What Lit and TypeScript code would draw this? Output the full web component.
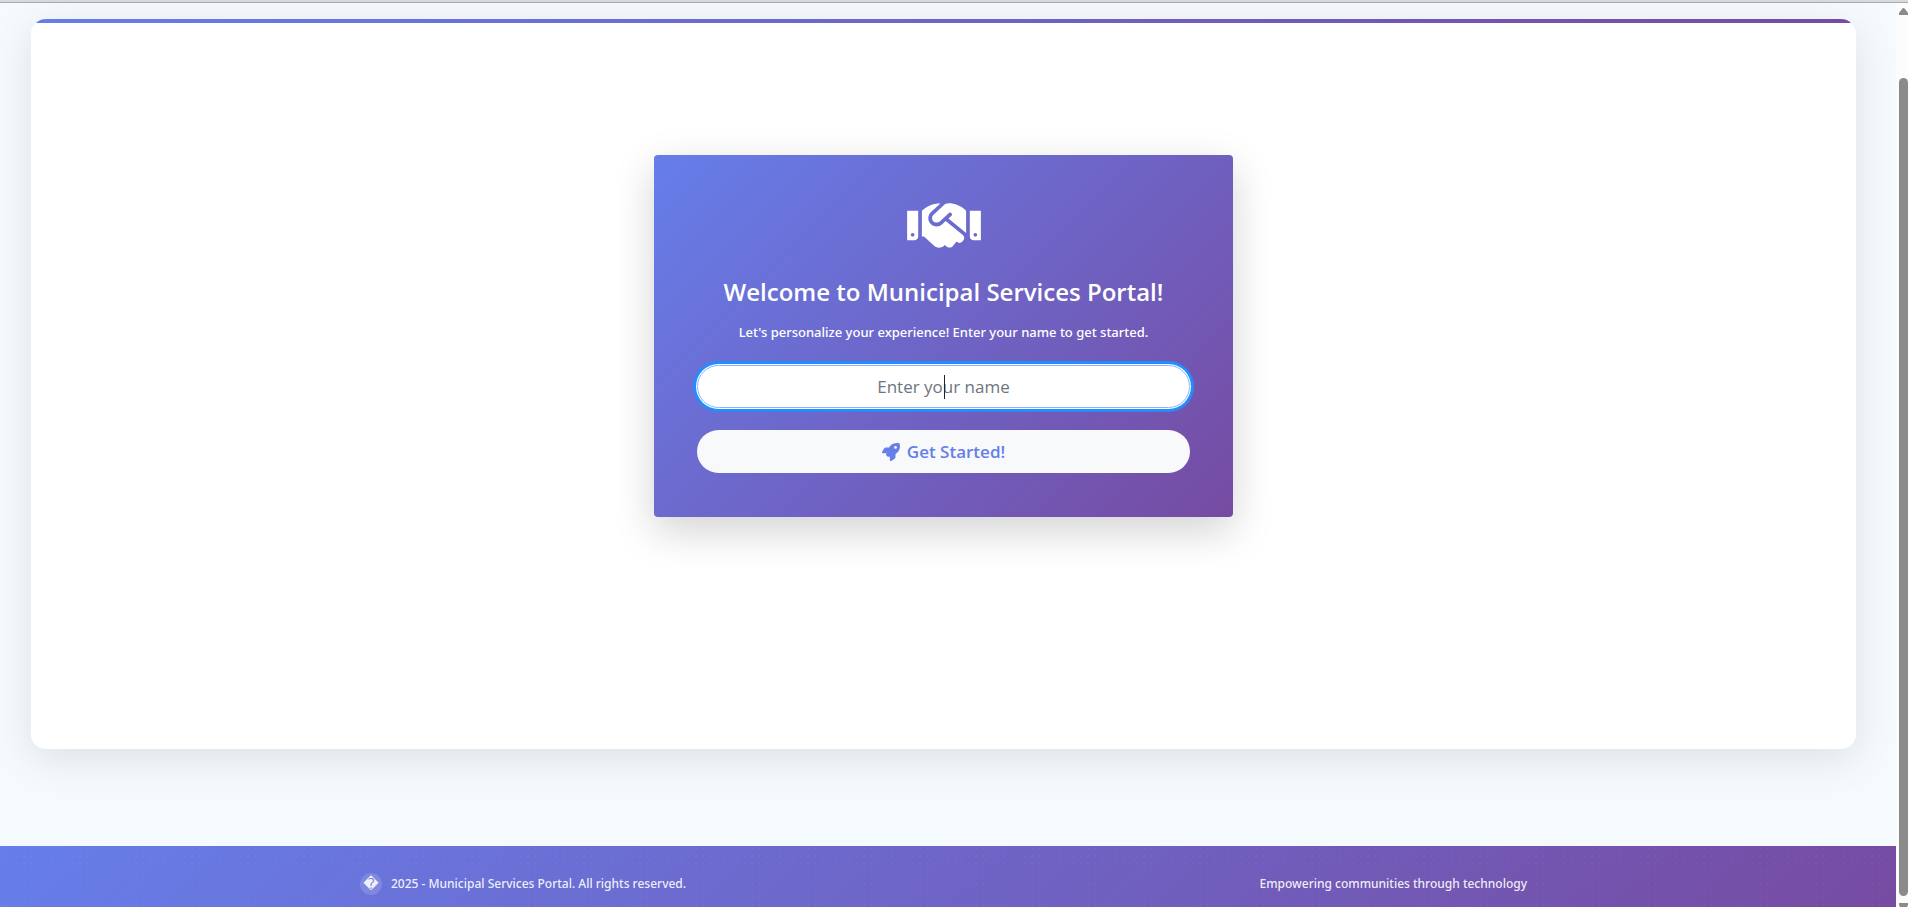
import { LitElement, html, css, svg } from "lit";
import { customElement, state } from "lit/decorators.js";

const handshake = svg`<path fill="currentColor" d="M0 383.9l64 .0404c17.75 0 32-14.29 32-32.03V128.3L0 128.3V383.9zM48 320.1c8.75 0 16 7.118 16 15.99c0 8.742-7.25 15.99-16 15.99S32 344.8 32 336.1C32 327.2 39.25 320.1 48 320.1zM348.8 64c-7.941 0-15.66 2.969-21.52 8.328L228.9 162.3C228.8 162.5 228.8 162.7 228.6 162.7C212 178.3 212.3 203.2 226.5 218.7c12.75 13.1 39.38 17.62 56.13 2.75C282.8 221.3 282.9 221.3 283 221.2l79.88-73.1c6.5-5.871 16.75-5.496 22.62 1c6 6.496 5.5 16.62-1 22.62l-26.12 23.87L504 313.7c2.875 2.496 5.5 4.996 7.875 7.742V127.1c-40.98-40.96-96.48-63.88-154.4-63.88L348.8 64zM334.6 217.4l-30 27.49c-29.75 27.11-75.25 24.49-101.8-4.371C176 211.2 178.1 165.7 207.3 138.9L289.1 64H282.5C224.7 64 169.1 87.08 128.2 127.9L128 351.8l18.25 .0369l90.5 81.82c27.5 22.37 67.75 18.12 90-9.246l18.12 15.24c15.88 12.1 39.38 10.5 52.38-5.371l31.38-38.6l5.374 4.498c13.75 11 33.88 9.002 45-4.748l9.538-11.78c11.12-13.75 9.036-33.78-4.694-44.93L334.6 217.4zM544 128.4v223.6c0 17.62 14.25 32.05 31.1 32.05L640 384V128.1L544 128.4zM592 352c-8.75 0-16-7.246-16-15.99c0-8.875 7.25-15.99 16-15.99S608 327.2 608 336.1C608 344.8 600.8 352 592 352z"/>`;

const rocket = svg`<path fill="currentColor" d="M156.6 384.9L125.7 353.1C117.2 345.5 114.2 333.1 117.1 321.8C120.1 312.9 124.1 301.3 129.8 288H24C15.38 288 7.414 283.4 3.146 275.9C-1.123 268.4-1.042 259.2 3.357 251.8L55.83 163.3C68.79 141.4 92.33 127.1 117.8 127.1H200C202.4 124 204.8 120.3 207.2 116.7C289.1-4.07 411.1-8.142 483.9 5.275C495.6 7.414 504.6 16.43 506.7 28.06C520.1 100.9 516.1 222.9 395.3 304.8C391.8 307.2 387.1 309.6 384 311.1V394.2C384 419.7 370.6 443.2 348.7 456.2L260.2 508.6C252.8 513 243.6 513.1 236.1 508.9C228.6 504.6 224 496.6 224 488V380.8C209.9 385.6 197.6 389.7 188.3 392.7C177.1 396.3 164.9 393.2 156.6 384.9V384.9zM384 167.1C406.1 167.1 424 150.1 424 127.1C424 105.9 406.1 87.1 384 87.1C361.9 87.1 344 105.9 344 127.1C344 150.1 361.9 167.1 384 167.1z"/>`;

@customElement("welcome-card")
class WelcomeCard extends LitElement {
  @state() private name = "";

  static styles = css`
    :host {
      display: block;
      width: 100%;
      max-width: 579px;
    }
    .card {
      box-sizing: border-box;
      padding: 41px 43px 44px;
      border-radius: 4px;
      background: linear-gradient(135deg, #667eea 0%, #764ba2 100%);
      box-shadow: 0 14px 42px rgba(0, 0, 0, 0.175);
      color: #fff;
      text-align: center;
    }
    .icon {
      display: block;
      width: 74px;
      height: 59px;
      margin: 0 auto 21px;
    }
    .title {
      margin: 0;
      font-size: 24px;
      line-height: 32px;
      font-weight: 600;
    }
    .lead {
      margin: 14px 0 23px;
      font-family: "Segoe UI", "Noto Sans", sans-serif;
      font-size: 13px;
      line-height: 20px;
      font-weight: 500;
    }
    .form {
      display: grid;
      gap: 22px;
    }
    .field {
      position: relative;
      display: block;
    }
    .field.empty::after {
      content: "";
      position: absolute;
      left: 50%;
      top: 10px;
      bottom: 9px;
      width: 1px;
      background: #212529;
    }
    .input,
    .button {
      box-sizing: border-box;
      display: block;
      width: 100%;
      height: 43px;
      border-radius: 22px;
      font-family: inherit;
      font-size: 17px;
      line-height: 26px;
      text-align: center;
    }
    .input {
      padding: 7px 14px;
      border: 1px solid #86b7fe;
      outline: 0;
      background: #fff;
      color: #212529;
      box-shadow: 0 0 0 1px #fff, 0 0 0 4px #258cfb;
    }
    .input::placeholder {
      color: #6c757d;
      opacity: 1;
    }
    .button {
      display: flex;
      align-items: center;
      justify-content: center;
      gap: 7px;
      padding: 0 14px;
      border: 0;
      background: #f8f9fa;
      color: #667eea;
      font-weight: 600;
      cursor: pointer;
    }
    .rocket {
      width: 18px;
      height: 18px;
    }
  `;

  render() {
    return html`
      <section class="card">
        <svg class="icon" viewBox="0 0 640 512" aria-hidden="true">${handshake}</svg>
        <h1 class="title">Welcome to Municipal Services Portal!</h1>
        <p class="lead">Let's personalize your experience! Enter your name to get started.</p>
        <form class="form" @submit=${(e: Event) => e.preventDefault()}>
          <label class="field ${this.name ? "" : "empty"}">
            <input
              class="input"
              type="text"
              placeholder="Enter your name"
              aria-label="Enter your name"
              .value=${this.name}
              @input=${(e: InputEvent) => (this.name = (e.target as HTMLInputElement).value)}
            />
          </label>
          <button class="button" type="submit">
            <svg class="rocket" viewBox="0 0 512 512" aria-hidden="true">${rocket}</svg>
            Get Started!
          </button>
        </form>
      </section>
    `;
  }
}

@customElement("site-footer")
class SiteFooter extends LitElement {
  static styles = css`
    :host {
      display: block;
    }
    .footer {
      box-sizing: border-box;
      padding: 27px 9px 12px 0;
      background: radial-gradient(circle at center, rgba(255, 255, 255, 0.03) 1px, transparent 1px) 0 0 / 7px 7px,
        linear-gradient(135deg, #667eea 0%, #764ba2 100%);
      color: rgba(255, 255, 255, 0.9);
      font-family: "Segoe UI", "Noto Sans", sans-serif;
      font-size: 12px;
      line-height: 22px;
      font-weight: 500;
    }
    .inner {
      display: flex;
      justify-content: space-between;
      max-width: 1167px;
      margin: 0 auto;
    }
    .left {
      display: flex;
      gap: 9px;
    }
    .badge {
      width: 22px;
      height: 22px;
      border-radius: 50%;
      background: rgba(255, 255, 255, 0.15);
      font-family: "DejaVu Sans", sans-serif;
      font-size: 15px;
      text-align: center;
    }
  `;

  render() {
    return html`
      <footer class="footer">
        <div class="inner">
          <div class="left">
            <span class="badge">&#xFFFD;</span>
            <span>2025 - Municipal Services Portal. All rights reserved.</span>
          </div>
          <span>Empowering communities through technology</span>
        </div>
      </footer>
    `;
  }
}

@customElement("app-root")
class AppRoot extends LitElement {
  static styles = css`
    :host {
      display: flex;
      flex-direction: column;
      height: 100vh;
      overflow: hidden;
      font-family: "Segoe UI", "Open Sans", "Noto Sans", sans-serif;
      background: #f5fafe;
    }
    .edge {
      flex: none;
      height: 2px;
      background: #d8dade;
      border-bottom: 1px solid #a9abb0;
    }
    .body {
      flex: 1;
      display: flex;
      min-height: 0;
    }
    .page {
      flex: 1;
      display: flex;
      flex-direction: column;
    }
    .main {
      flex: 1;
      display: flex;
      padding: 16px 40px 97px 31px;
    }
    .panel {
      flex: 1;
      display: flex;
      flex-direction: column;
      align-items: center;
      border-radius: 15px;
      overflow: hidden;
      background: #fff;
    }
    .shade {
      flex: 1;
      display: flex;
      border-radius: 15px;
      box-shadow: 0 10px 40px rgba(0, 0, 0, 0.1);
    }
    .accent {
      width: 100%;
      height: 4px;
      margin-bottom: 132px;
      background: linear-gradient(90deg, #667eea, #764ba2);
    }
    .scroll {
      flex: none;
      display: flex;
      flex-direction: column;
      width: 9px;
      padding: 5px 0 0 3px;
      background: #fcfcfc;
    }
    .arrow {
      width: 9px;
      height: 7px;
      color: #8b8b8b;
    }
    .thumb {
      flex: 1;
      margin: 63px 0 7px;
      border-radius: 5px;
      background: #8b8b8b;
    }
    .down {
      height: 4px;
    }
  `;

  render() {
    return html`
      <div class="edge"></div>
      <div class="body">
        <div class="page">
          <main class="main">
            <div class="shade">
              <div class="panel">
                <div class="accent"></div>
                <welcome-card></welcome-card>
              </div>
            </div>
          </main>
          <site-footer></site-footer>
        </div>
        <div class="scroll" aria-hidden="true">
          <svg class="arrow" viewBox="0 0 9 7"><path fill="currentColor" d="M0 7V5L3 1Q4.500 -1 6 1L9 5V7Z" /></svg>
          <div class="thumb"></div>
          <svg class="arrow down" viewBox="0 0 9 4"><path fill="currentColor" d="M0 0H9V2L8 4H1L0 2Z" /></svg>
        </div>
      </div>
    `;
  }
}
